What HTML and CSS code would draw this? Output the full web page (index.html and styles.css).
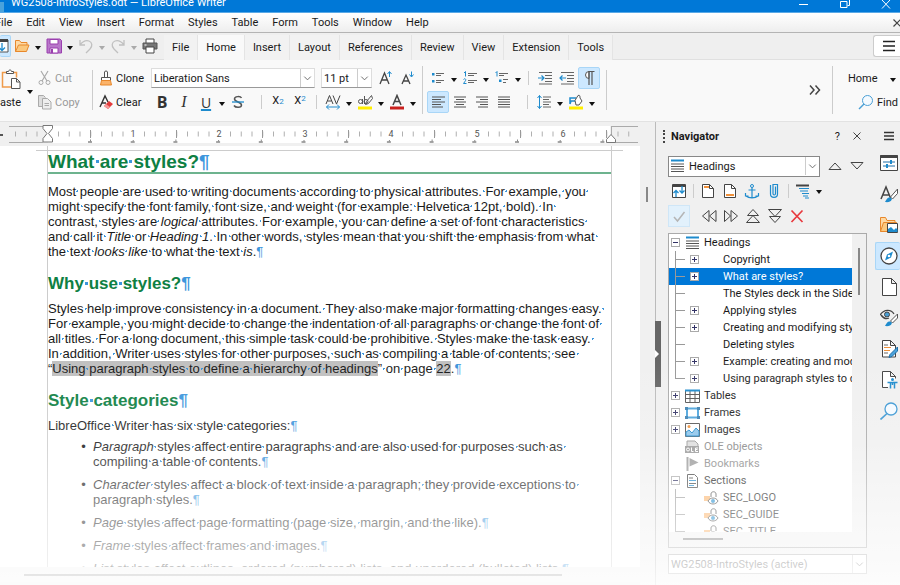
FILE: index.html
```html
<!DOCTYPE html>
<html lang="en">
<head>
  <meta charset="UTF-8" />
  <meta name="viewport" content="width=device-width, initial-scale=1.0"/>
  <title>WG2508-IntroStyles.odt — LibreOffice Writer</title>
  <link rel="stylesheet" href="styles.css">
</head>
<body>
  <div class="window">
    <header class="titlebar">
      <span class="app-icon"></span>
      <span class="title">WG2508-IntroStyles.odt — LibreOffice Writer</span>
      <button class="win-btn" aria-label="Minimize"><svg width="12" height="12" viewBox="0 0 12 12"><path d="M1 4.500h9"/></svg></button>
      <button class="win-btn" aria-label="Restore"><svg width="12" height="12" viewBox="0 0 12 12"><path d="M1.500 1.500h6.500v6h-6.500zM4 -.5h6.500v6h-2"/></svg></button>
      <button class="win-btn" aria-label="Close"><svg width="12" height="12" viewBox="0 0 12 12"><path d="M2 0l8 8.500M10 0l-8 8.500"/></svg></button>
    </header>

    <nav class="menubar">
      <a href="#">File</a>
      <a href="#">Edit</a>
      <a href="#">View</a>
      <a href="#">Insert</a>
      <a href="#">Format</a>
      <a href="#">Styles</a>
      <a href="#">Table</a>
      <a href="#">Form</a>
      <a href="#">Tools</a>
      <a href="#">Window</a>
      <a href="#">Help</a>
      <button class="close-doc" aria-label="Close document"><svg width="8" height="8" viewBox="0 0 8 8"><path d="M1.500 .5l7 7M8.500 .5l-7 7" stroke="#444" stroke-width="1.200"/></svg></button>
    </nav>

    <div class="tabbar">
      <button class="tool first on" aria-label="Templates"><svg width="16" height="16" viewBox="0 0 16 16"><path d="M1 2h13v12h-13z" fill="#fff" stroke="#555"/><path d="M1 2.500h13" stroke="#444" stroke-width="3"/><path d="M8 5v7M5 9.500l3 3 3-3" fill="none" stroke="#1e8bcd" stroke-width="1.300"/></svg></button>
      <button class="tool" aria-label="Open"><svg width="16" height="16" viewBox="0 0 16 16"><path d="M1.500 13.500v-11h4l1.500 2h6v2.500" fill="#fdd9a4" stroke="#e8872a"/><path d="M1.500 13.500l3-6.500h10.500l-2.500 6.500z" fill="#fbc87e" stroke="#e8872a"/></svg></button>
      <button class="caret" aria-label="Open options"></button>
      <button class="tool" aria-label="Save"><svg width="16" height="16" viewBox="0 0 16 16"><path d="M1 1h13l1.500 1.500v12.500h-14.500z" fill="#b877c9" stroke="#9a3fae"/><path d="M4 1.500h8v4.500h-8zM4 10h8v5h-8z" fill="#fff" stroke="#9a3fae"/><path d="M6 11v4" stroke="#9a3fae" stroke-width="2"/></svg></button>
      <button class="caret" aria-label="Save options"></button>
      <button class="tool" aria-label="Undo" disabled><svg width="16" height="16" viewBox="0 0 16 16"><path d="M2 2v5h5M2 7c3-4 6-5 9-4s4 5 1 8l-4 4" fill="none" stroke="#c0c0c0" stroke-width="1.300"/></svg></button>
      <button class="caret off" aria-label="Undo options" disabled></button>
      <button class="tool" aria-label="Redo" disabled><svg width="16" height="16" viewBox="0 0 16 16"><path d="M14 2v5h-5M14 7c-3-4-6-5-9-4s-4 5-1 8l4 4" fill="none" stroke="#c0c0c0" stroke-width="1.300"/></svg></button>
      <button class="caret off" aria-label="Redo options" disabled></button>
      <button class="tool" aria-label="Print"><svg width="16" height="16" viewBox="0 0 16 16"><path d="M4 5v-4h8v4" fill="#fff" stroke="#444"/><path d="M1 5h14v6h-14z" fill="#777" stroke="#555"/><path d="M4 9h8v6h-8z" fill="#fff" stroke="#444"/><path d="M2.500 7h2" stroke="#fff"/></svg></button>
      <div class="tabs">
        <button class="tab">File</button>
        <button class="tab active">Home</button>
        <button class="tab">Insert</button>
        <button class="tab">Layout</button>
        <button class="tab">References</button>
        <button class="tab">Review</button>
        <button class="tab">View</button>
        <button class="tab">Extension</button>
        <button class="tab">Tools</button>
      </div>
      <button class="hamburger" aria-label="Menu"><svg width="14" height="12" viewBox="0 0 14 12"><path d="M1 1.500h12M1 6h12M1 10.500h12" stroke="#222" stroke-width="1.500"/></svg></button>
    </div>

    <div class="ribbon">
      <div class="paste">
        <button class="paste-btn"><svg width="20" height="22" viewBox="0 0 20 22"><path d="M11 18h-9.500v-14.500h14v5" fill="none" stroke="#ef9a4a" stroke-width="1.500"/><path d="M5.500 4.500v-2h2c0-2 3-2 3 0h2v2z" fill="#fff" stroke="#555"/><path d="M10.500 9.500h5l3.500 3.500v6.500h-8.500z" fill="#fff" stroke="#555"/><path d="M15.500 9.500v3.500h3.500" fill="none" stroke="#555"/></svg><span>Paste</span></button>
        <button class="caret" aria-label="Paste options"></button>
      </div>
      <div class="rows clip">
        <button class="labeled" disabled><svg width="14" height="16" viewBox="0 0 14 16"><path d="M3 1l6 10M10 1l-6 10" fill="none" stroke="#aaa" stroke-width="1.200"/><circle cx="3" cy="12.500" r="2" fill="none" stroke="#aaa"/><circle cx="10" cy="12.500" r="2" fill="none" stroke="#aaa"/></svg>Cut</button>
        <button class="labeled" disabled><svg width="14" height="16" viewBox="0 0 14 16"><path d="M4 12.500h-3.500v-11h5l2 2" fill="#ddd" stroke="#aaa"/><path d="M4.500 4.500h5l3.500 3.500v7h-8.500z" fill="#eee" stroke="#aaa"/><path d="M6.500 9.500h4.500M6.500 11.500h4.500" stroke="#aaa"/></svg>Copy</button>
      </div>
      <span class="rule"></span>
      <div class="rows clone">
        <button class="labeled"><svg width="14" height="16" viewBox="0 0 14 16"><path d="M5.500 7v-5c0-1.300 3-1.300 3 0v5" fill="#fff" stroke="#555"/><path d="M2.500 7.500h9v3h-9z" fill="#fff" stroke="#555"/><path d="M2.500 10.500h9l1 4.500h-11z" fill="#fbb36a" stroke="#e8872a"/></svg>Clone</button>
        <button class="labeled"><svg width="14" height="16" viewBox="0 0 14 16"><path d="M1 13l5-11 3 6M3 9h4" fill="none" stroke="#333" stroke-width="1.400"/><path d="M5 12l5-5 4 3-5 5z" fill="#e33b3b"/><path d="M5 12l2-2 4 3-2 2z" fill="#f59a9a"/></svg>Clear</button>
      </div>

      <div class="rows font">
        <div class="row">
          <div class="combo font-name">
            <select aria-label="Font name"><option>Liberation Sans</option></select>
            <svg class="chev" width="14" height="18" viewBox="0 0 14 18"><path d="M3.500 7.500l3.500 3.500 3.500-3.500"/></svg>
          </div>
          <div class="combo font-size">
            <select aria-label="Font size"><option>11 pt</option></select>
            <svg class="chev" width="14" height="18" viewBox="0 0 14 18"><path d="M3.500 7.500l3.500 3.500 3.500-3.500"/></svg>
          </div>
          <button class="tool" aria-label="Increase size"><svg width="16" height="16" viewBox="0 0 16 16"><path d="M2 14l4.500-11 4.500 11M3.500 10h6" fill="none" stroke="#444" stroke-width="1.300"/><path d="M11.500 7v-5M9.500 4l2-2.500 2 2.500" fill="none" stroke="#1e8bcd"/></svg></button>
          <button class="tool" aria-label="Decrease size"><svg width="16" height="16" viewBox="0 0 16 16"><path d="M2 14l4-9 4 9M3.500 11h5" fill="none" stroke="#444" stroke-width="1.300"/><path d="M11.500 1.500v5M9.500 4.500l2 2.500 2-2.500" fill="none" stroke="#1e8bcd"/></svg></button>
        </div>
        <div class="row">
          <button class="tool bold">B</button>
          <button class="tool italic">I</button>
          <button class="tool under">U</button>
          <button class="caret" aria-label="Underline options"></button>
          <button class="tool strike" aria-label="Strikethrough"><svg width="16" height="16" viewBox="0 0 16 16"><path d="M11.500 4c-1-2-7-2-7 1s7 3 7 6-6 3-7.500 .5" fill="none" stroke="#555" stroke-width="1.500"/><path d="M2 8h12" stroke="#1e8bcd" stroke-width="1.300"/></svg></button>
          <span class="sep wide"></span>
          <button class="tool script">X<sub>2</sub></button>
          <button class="tool script">X<sup>2</sup></button>
          <span class="sep"></span>
          <button class="tool" aria-label="Spacing"><svg width="16" height="16" viewBox="0 0 16 16"><path d="M1 10l3.500-8.500 3.500 8.500M2.500 7h4M8 1.500l3.500 8.500 3.500-8.500" fill="none" stroke="#444"/><path d="M1.500 13h13M4 10.500l-2.500 2.500 2.500 2.500M12 10.500l2.500 2.500-2.500 2.500" fill="none" stroke="#1e8bcd"/></svg></button>
          <button class="caret" aria-label="Spacing options"></button>
          <button class="tool" aria-label="Highlighting"><svg width="16" height="16" viewBox="0 0 16 16"><path d="M1 12.500h14v3h-14z" fill="#ffee00"/><circle cx="3.500" cy="7.500" r="2" fill="none" stroke="#555"/><path d="M5.500 5v5M7.500 2v8M14.500 1.500l-5 6-1 3 3-1 4-5z" fill="none" stroke="#555"/><circle cx="9" cy="7.500" r="2" fill="none" stroke="#555"/></svg></button>
          <button class="caret" aria-label="Highlighting options"></button>
          <button class="tool" aria-label="Font color"><svg width="16" height="16" viewBox="0 0 16 16"><path d="M1 12.500h14v3h-14z" fill="#c9211e"/><path d="M4 11l4-9.500 4 9.500M5.500 7.500h5" fill="none" stroke="#444" stroke-width="1.500"/></svg></button>
          <button class="caret" aria-label="Font color options"></button>
        </div>
      </div>
      <span class="rule tall"></span>

      <div class="rows para">
        <div class="row">
          <button class="tool" aria-label="Bullets"><svg width="16" height="16" viewBox="0 0 16 16"><path d="M2 3h2.500v2.500h-2.500zM2 10h2.500v2.500h-2.500z" fill="#1e8bcd"/><path d="M6 3.500h8M6 5.500h5M6 10.500h8M6 12.500h5" stroke="#666"/></svg></button>
          <button class="caret" aria-label="Bullets options"></button>
          <button class="tool" aria-label="Numbering"><svg width="16" height="16" viewBox="0 0 16 16"><path d="M2 3l1.500-1.500v5M1.500 9.500c1-1.500 3-.5 2 1.200l-2 2.800h3" fill="none" stroke="#1e8bcd"/><path d="M6 3.500h9M6 5.500h6M6 10.500h9M6 12.500h6" stroke="#666"/></svg></button>
          <button class="caret" aria-label="Numbering options"></button>
          <button class="tool" aria-label="Outline"><svg width="16" height="16" viewBox="0 0 16 16"><path d="M1.500 3l1.500-1.500v5" fill="none" stroke="#1e8bcd"/><path d="M5 9.500h2.500v2.500h-2.500z" fill="#1e8bcd"/><path d="M5 3.500h9M5 5.500h5M9 9.500h5M9 12.500h3" stroke="#666"/></svg></button>
          <button class="caret" aria-label="Outline options"></button>
          <span class="sep"></span>
          <button class="tool" aria-label="Increase indent"><svg width="16" height="16" viewBox="0 0 16 16"><path d="M2 2.500h13M8 5.500h7M8 8.500h7M8 11.500h7M2 14h13" stroke="#666"/><path d="M1 8h6M4.500 5.500l2.500 2.500-2.500 2.500" fill="none" stroke="#1e8bcd" stroke-width="1.200"/></svg></button>
          <button class="tool" aria-label="Decrease indent"><svg width="16" height="16" viewBox="0 0 16 16"><path d="M2 2.500h13M8 5.500h7M8 8.500h7M8 11.500h7M2 14h13" stroke="#666"/><path d="M1 8h6M3.500 5.500l-2.500 2.500 2.500 2.500" fill="none" stroke="#1e8bcd" stroke-width="1.200"/></svg></button>
          <button class="tool on" aria-label="Formatting marks"><svg width="16" height="16" viewBox="0 0 16 16"><path d="M8 1.500a3.500 3.500 0 0 0 0 7z" fill="#fff" stroke="#555"/><path d="M8 15v-13.500h5.500M11 15v-13.500" fill="none" stroke="#555" stroke-width="1.200"/></svg></button>
        </div>
        <div class="row">
          <button class="tool on" aria-label="Align left"><svg width="16" height="16" viewBox="0 0 16 16"><path d="M2 3h13M2 5.500h9M2 8h13M2 10.500h9M2 13h11" stroke="#555"/></svg></button>
          <button class="tool" aria-label="Center"><svg width="16" height="16" viewBox="0 0 16 16"><path d="M2 3h12M4 5.500h8M2 8h12M4 10.500h8M2 13h12" stroke="#555"/></svg></button>
          <button class="tool" aria-label="Align right"><svg width="16" height="16" viewBox="0 0 16 16"><path d="M2 3h12M6 5.500h8M2 8h12M6 10.500h8M4 13h10" stroke="#555"/></svg></button>
          <button class="tool" aria-label="Justify"><svg width="16" height="16" viewBox="0 0 16 16"><path d="M2 3h12M2 5.500h12M2 8h12M2 10.500h12M2 13h12" stroke="#555"/></svg></button>
          <span class="sep wide"></span>
          <button class="tool" aria-label="Line spacing"><svg width="16" height="16" viewBox="0 0 16 16"><path d="M7 3h8M7 5.500h6M7 8h8M7 10.500h6M7 13h8" stroke="#666"/><path d="M3.500 1.500v13M1.500 4l2-2.500 2 2.500M1.500 12l2 2.500 2-2.500" fill="none" stroke="#1e8bcd"/></svg></button>
          <button class="caret" aria-label="Line spacing options"></button>
          <button class="tool" aria-label="Background color"><svg width="16" height="16" viewBox="0 0 16 16"><path d="M1 12.500h14v3h-14z" fill="#ffee00"/><path d="M2 10v-6h6M2 10l1-3h5" fill="none" stroke="#1e8bcd" stroke-width="1.500"/><path d="M7 6.500l3-5c2-1 2 1 2 2.500l2 3-3 4h-3z" fill="#fff" stroke="#555"/></svg></button>
          <button class="caret" aria-label="Background options"></button>
        </div>
      </div>
      <span class="rule"></span>
      <button class="more" aria-label="More"><svg width="14" height="12" viewBox="0 0 14 12"><path d="M2 1.500l4 4.500-4 4.500M7.500 1.500l4 4.500-4 4.500" fill="none" stroke="#444" stroke-width="1.500"/></svg></button>
      <span class="rule tall"></span>
      <div class="rows home">
        <button class="labeled">Home <span class="caret"></span></button>
        <button class="labeled find"><svg width="16" height="16" viewBox="0 0 16 16"><circle cx="9.500" cy="6.500" r="5" fill="#f4faff" stroke="#4a9fd5"/><path d="M6 10l-5 5" stroke="#4a9fd5" stroke-width="1.500"/></svg>Find</button>
      </div>
    </div>

    <main class="main">
      <section class="editor">
        <div class="ruler">
          <svg width="640" height="24" viewBox="0 0 640 24">
            <path d="M48 4h562v17h-562z" fill="#fff"/>
            <path d="M9 4.500h34M9 20.500h34M611 4.500h27M611 20.500h27M611.500 4v10" stroke="#aaa"/>
            <path d="M0 13h3" stroke="#555" stroke-width="2"/>
            <path d="M15 12h600M617.500 12h14" stroke="#b0b0b0" stroke-width="5" stroke-dasharray="1 9.750"/>
            <path d="M90 12h520" stroke="#999" stroke-width="8" stroke-dasharray="1 85"/>
            <path d="M88 20h522" stroke="#888" stroke-width="1.500" stroke-dasharray="4 38.700"/>
            <path d="M90 18.500h520" stroke="#888" stroke-width="2" stroke-dasharray="1 41.700"/>
            <path d="M129 6h9v12h-9zM215 6h9v12h-9zM301 6h9v12h-9zM387 6h9v12h-9zM473 6h9v12h-9zM559 6h9v12h-9z" fill="#fff"/>
            <g class="ruler-num"><text x="133" y="15">1</text><text x="219" y="15">2</text><text x="305" y="15">3</text><text x="391" y="15">4</text><text x="477" y="15">5</text><text x="563" y="15">6</text></g>
            <path d="M43 3.500h9.500v3l-4 5 4 5v3.500h-9.500v-3.500l4-5-4-5z" fill="#fff" stroke="#777"/>
            <path d="M606.500 20.500v-3l4.500-5 4.500 5v3z" fill="#fff" stroke="#777"/>
          </svg>
        </div>
        <article class="page">
          <div class="text">
            <h1>What are styles?<i class="pil">¶</i></h1>
            <p>Most people are used to writing documents according to physical attributes. For example, you <br>might specify the font family, font size, and weight (for example: Helvetica 12pt, bold). In <br>contrast, styles are <em>logical</em> attributes. For example, you can define a set of font characteristics <br>and call it <em>Title</em> or <em>Heading 1</em>. In other words, styles mean that you shift the emphasis from what <br>the text <em>looks like</em> to what the text <em>is</em>.<i class="pil">¶</i></p>
            <h2>Why use styles?<i class="pil">¶</i></h2>
            <p>Styles help improve consistency in a document. They also make major formatting changes easy. <br>For example, you might decide to change the indentation of all paragraphs or change the font of <br>all titles. For a long document, this simple task could be prohibitive. Styles make the task easy. <br>In addition, Writer uses styles for other purposes, such as compiling a table of contents; see <br>“<span class="field">Using paragraph styles to define a hierarchy of headings</span>” on page <span class="field">22</span>.<i class="pil">¶</i></p>
            <h2>Style categories<i class="pil">¶</i></h2>
            <p>LibreOffice Writer has six style categories:<i class="pil">¶</i></p>
            <ul>
              <li><em>Paragraph</em> styles affect entire paragraphs and are also used for purposes such as <br>compiling a table of contents.<i class="pil">¶</i></li>
              <li><em>Character</em> styles affect a block of text inside a paragraph; they provide exceptions to <br>paragraph styles.<i class="pil">¶</i></li>
              <li><em>Page</em> styles affect page formatting (page size, margin, and the like).<i class="pil">¶</i></li>
              <li><em>Frame</em> styles affect frames and images.<i class="pil">¶</i></li>
              <li><em>List</em> styles affect outlines, ordered (numbered) lists, and unordered (bulleted) lists.<i class="pil">¶</i></li>
            </ul>
          </div>
        </article>
        <div class="hscroll"><span></span></div>
      </section>
      <div class="vscroll"><span></span></div>

      <div class="splitter"><button aria-label="Hide sidebar"></button></div>

      <aside class="deck">
        <div class="deck-head">
          <span class="grip"></span>
          <h3>Navigator</h3>
          <button class="help" aria-label="Help">?</button>
          <button class="tool" aria-label="Close sidebar"><svg width="10" height="10" viewBox="0 0 10 10"><path d="M1.500 1.500l7 7M8.500 1.500l-7 7" stroke="#444"/></svg></button>
        </div>
        <div class="nav-by">
          <div class="combo">
            <svg width="16" height="16" viewBox="0 0 16 16"><path d="M2 2.500h13" stroke="#1e8bcd" stroke-width="2"/><path d="M2 6h13M2 8.500h13M2 11h13M2 13.500h13" stroke="#555"/></svg>
            <select aria-label="Navigate by"><option>Headings</option></select>
            <svg class="chev" width="14" height="18" viewBox="0 0 14 18"><path d="M3.500 7.500l3.500 3.500 3.500-3.500"/></svg>
          </div>
          <button class="tool" aria-label="Previous"><svg width="16" height="16" viewBox="0 0 16 16"><path d="M2 11.500l6-6.500 6 6.500z" fill="none" stroke="#444"/></svg></button>
          <button class="tool" aria-label="Next"><svg width="16" height="16" viewBox="0 0 16 16"><path d="M2 4.500l6 6.500 6-6.500z" fill="none" stroke="#444"/></svg></button>
        </div>
        <div class="nav-tools">
          <button class="tool" aria-label="Content view"><svg width="16" height="16" viewBox="0 0 16 16"><path d="M1.500 14.500v-13h13v13z" fill="#fff" stroke="#444"/><path d="M1.500 3h13" stroke="#444" stroke-width="2"/><path d="M5 14v-6M2.500 10l2.500-2.500 2.500 2.500M11 3v7M8.500 7.500l2.500 2.500 2.500-2.500" fill="none" stroke="#1e8bcd" stroke-width="1.300"/></svg></button>
          <span class="sep"></span>
          <button class="tool" aria-label="Header"><svg width="16" height="16" viewBox="0 0 16 16"><path d="M2.500 1.500h7l4 4v9h-11z" fill="#fff" stroke="#444"/><path d="M9.500 1.500v4h4" fill="none" stroke="#444"/><path d="M4 4h5" stroke="#f0913a" stroke-width="2"/></svg></button>
          <button class="tool" aria-label="Footer"><svg width="16" height="16" viewBox="0 0 16 16"><path d="M2.500 1.500h7l4 4v9h-11z" fill="#fff" stroke="#444"/><path d="M9.500 1.500v4h4" fill="none" stroke="#444"/><path d="M4 12h8" stroke="#f0913a" stroke-width="2"/></svg></button>
          <button class="tool" aria-label="Anchor"><svg width="16" height="16" viewBox="0 0 16 16"><circle cx="8" cy="3" r="1.500" fill="none" stroke="#1e8bcd"/><path d="M8 4.500v10M4.500 7h7M1.500 10v3h3M14.500 10v3h-3M2 13c3 2.500 9 2.500 12 0" fill="none" stroke="#1e8bcd" stroke-width="1.200"/></svg></button>
          <button class="tool" aria-label="Reminder"><svg width="16" height="16" viewBox="0 0 16 16"><path d="M4.500 2v9c0 4.500 7 4.500 7 0v-9.500h-4.500v9c0 2 2.500 2 2.500 0v-7" fill="none" stroke="#1e8bcd" stroke-width="1.200"/></svg></button>
          <span class="sep"></span>
          <button class="tool" aria-label="Heading levels"><svg width="16" height="16" viewBox="0 0 16 16"><path d="M1 2.500h13" stroke="#444" stroke-width="2"/><path d="M4 5.500h10M5 8h8M7 10.500h7M8 13h5M10 15h4" stroke="#1e8bcd"/></svg></button>
          <button class="caret" aria-label="Heading level options"></button>
        </div>
        <div class="nav-tools">
          <button class="tool check" aria-label="Apply"><svg width="16" height="16" viewBox="0 0 16 16"><path d="M3 9l3.500 4 7-9" fill="none" stroke="#b5b5b5" stroke-width="1.500"/></svg></button>
          <span class="gap"></span>
          <button class="tool" aria-label="Promote"><svg width="16" height="16" viewBox="0 0 16 16"><path d="M8 2.500v11l-6.500-5.500zM15 2.500v11l-6.500-5.500z" fill="none" stroke="#444"/></svg></button>
          <button class="tool" aria-label="Demote"><svg width="16" height="16" viewBox="0 0 16 16"><path d="M1.500 2.500v11l6-5.500zM8 2.500v11l6.500-5.500z" fill="none" stroke="#444"/></svg></button>
          <button class="tool" aria-label="Move up"><svg width="16" height="16" viewBox="0 0 16 16"><path d="M2.500 7.500l5.500-6 5.500 6zM1.500 14.500l6.500-7 6.500 7z" fill="none" stroke="#444"/></svg></button>
          <button class="tool" aria-label="Move down"><svg width="16" height="16" viewBox="0 0 16 16"><path d="M1.500 1.500l6.500 7 6.500-7zM2.500 8.500l5.500 6 5.500-6z" fill="none" stroke="#444"/></svg></button>
          <button class="tool" aria-label="Delete"><svg width="16" height="16" viewBox="0 0 16 16"><path d="M2.500 2.500l11 11.500M13.500 2.500l-11 11.500" stroke="#e8383d" stroke-width="1.700"/></svg></button>
        </div>

        <div class="tree-box">
          <div class="tree">
            <ul>
              <li class="row1"><b class="exp open"></b><svg width="16" height="16" viewBox="0 0 16 16"><path d="M2 2.500h13" stroke="#1e8bcd" stroke-width="2"/><path d="M2 6h13M2 8.500h13M2 11h13M2 13.500h13" stroke="#555"/></svg>Headings</li>
              <li class="row2"><b class="exp"></b><span>Copyright</span></li>
              <li class="row2 selected"><b class="exp"></b><span>What are styles?</span></li>
              <li class="row2"><b></b><span>The Styles deck in the Sidebar</span></li>
              <li class="row2"><b class="exp"></b><span>Applying styles</span></li>
              <li class="row2"><b class="exp"></b><span>Creating and modifying styles</span></li>
              <li class="row2"><b></b><span>Deleting styles</span></li>
              <li class="row2"><b class="exp"></b><span>Example: creating and modifying</span></li>
              <li class="row2 last"><b class="exp"></b><span>Using paragraph styles to define</span></li>
              <li class="row1"><b class="exp"></b><svg width="16" height="16" viewBox="0 0 16 16"><path d="M1.500 2.500h14v12h-14zM1.500 6.500h14M1.500 10.500h14M6 2.500v12M11 2.500v12" fill="#fff" stroke="#555"/><path d="M1 2.500h15" stroke="#1e8bcd" stroke-width="2"/></svg>Tables</li>
              <li class="row1"><b class="exp"></b><svg width="16" height="16" viewBox="0 0 16 16"><path d="M3 3.500h11v9h-11z" fill="#fff" stroke="#4aa3dc" stroke-width="2"/><path d="M1 2h3v3h-3zM13 2h3v3h-3zM1 11h3v3h-3zM13 11h3v3h-3z" fill="#3a7fb0"/></svg>Frames</li>
              <li class="row1"><b class="exp"></b><svg width="16" height="16" viewBox="0 0 16 16"><path d="M1.500 1.500h14v13h-14z" fill="#fff" stroke="#555"/><circle cx="5" cy="4.500" r="1.500" fill="#f0913a"/><path d="M2 14v-4l3-2 3 3 4-5 3 3v5z" fill="#8cc4ea" stroke="#1e8bcd"/></svg>Images</li>
              <li class="row1 off"><b></b><svg width="16" height="16" viewBox="0 0 16 16"><path d="M3 8v-6h8l3 3v3" fill="#ddd" stroke="#999"/><path d="M1 7h14v7h-14z" fill="#999"/><circle cx="4" cy="10.500" r="1.500" fill="none" stroke="#fff"/><path d="M7.500 8.500v4h2M14 9h-2.500v3.500h2.500M11.500 10.500h2" fill="none" stroke="#fff"/></svg>OLE objects</li>
              <li class="row1 off"><b></b><svg width="16" height="16" viewBox="0 0 16 16"><path d="M3.500 1v14" stroke="#999" stroke-width="2"/><path d="M5.500 2l9 4.500-9 4z" fill="#999"/></svg>Bookmarks</li>
              <li class="row1"><b class="exp open"></b><svg width="16" height="16" viewBox="0 0 16 16"><path d="M3.500 1.500h7l3 3v10h-10z" fill="#fff" stroke="#444"/><path d="M5 5h4M5 10.500h7" stroke="#444"/><path d="M5 7.500h7M5 12.500h5" stroke="#1e8bcd"/></svg>Sections</li>
              <li class="row2 sect"><svg width="16" height="16" viewBox="0 0 16 16"><path d="M1 6h6v5h-6z" fill="#fbb36a"/><path d="M8 7v-3c0-3 5-3 5 0v3" fill="none" stroke="#444"/><path d="M5 11c2-4 8-4 10 0-2 4-8 4-10 0z" fill="#fff" stroke="#444"/><circle cx="10" cy="11" r="2" fill="#1e8bcd"/></svg><span>SEC_LOGO</span></li>
              <li class="row2 sect"><svg width="16" height="16" viewBox="0 0 16 16"><path d="M1 6h6v5h-6z" fill="#fbb36a"/><path d="M8 7v-3c0-3 5-3 5 0v3" fill="none" stroke="#444"/><path d="M5 11c2-4 8-4 10 0-2 4-8 4-10 0z" fill="#fff" stroke="#444"/><circle cx="10" cy="11" r="2" fill="#1e8bcd"/></svg><span>SEC_GUIDE</span></li>
              <li class="row2 sect"><svg width="16" height="16" viewBox="0 0 16 16"><path d="M1 6h6v5h-6z" fill="#fbb36a"/><path d="M8 7v-3c0-3 5-3 5 0v3" fill="none" stroke="#444"/><path d="M5 11c2-4 8-4 10 0-2 4-8 4-10 0z" fill="#fff" stroke="#444"/><circle cx="10" cy="11" r="2" fill="#1e8bcd"/></svg><span>SEC_TITLE</span></li>
            </ul>
          </div>
          <div class="tree-v"></div>
          <div class="tree-h"></div>
        </div>
        <div class="combo doc-list">
          <select aria-label="Active window"><option>WG2508-IntroStyles (active)</option></select>
          <svg class="chev" width="14" height="18" viewBox="0 0 14 18"><path d="M3.500 7.500l3.500 3.500 3.500-3.500"/></svg>
        </div>
      </aside>

      <nav class="side-tabs">
        <button aria-label="Sidebar settings"><svg width="18" height="18" viewBox="0 0 18 18"><path d="M4 5.500h10M4 9h10M4 12.500h10" stroke="#333" stroke-width="1.300"/></svg></button>
        <button aria-label="Properties"><svg width="18" height="18" viewBox="0 0 18 18"><path d="M.5 1.500h17v15h-17z" fill="#fff" stroke="#444"/><path d="M.5 2.500h17" stroke="#444" stroke-width="3"/><path d="M3 8h12M3 12h12" stroke="#1e6fa8"/><path d="M10 6h2v4h-2zM6 10h2v4h-2z" fill="#1e8bcd"/></svg></button>
        <button aria-label="Styles"><svg width="18" height="18" viewBox="0 0 18 18"><path d="M1 14l5-12 4.500 11M3 10h6" fill="none" stroke="#444" stroke-width="1.500"/><path d="M17.500 4l-7 8 2 2 5-5.500z" fill="#fff" stroke="#555"/><path d="M5 17c2-4 4-6 7-3-1 3-4 3.500-7 3z" fill="#1e8bcd"/></svg></button>
        <button aria-label="Gallery"><svg width="18" height="18" viewBox="0 0 18 18"><path d="M.5 15.500v-14h5l1.500 3h8v3" fill="#fdd9a4" stroke="#e8872a"/><path d="M.5 15.500l3-9h13v9z" fill="#fbc87e" stroke="#e8872a"/><path d="M7.500 7.500h10v9h-10z" fill="#fff" stroke="#444"/><path d="M8 16v-3l3-2 3 3 2-2 1.500 1.500v2.500z" fill="#1e8bcd"/></svg></button>
        <button class="on" aria-label="Navigator"><svg width="18" height="18" viewBox="0 0 18 18"><circle cx="9" cy="9" r="8" fill="#fff" stroke="#444" stroke-width="1.300"/><path d="M13 4.500l-2 6-6 3 2-6z" fill="#1e8bcd"/><circle cx="9" cy="9" r="1.300" fill="#fff"/></svg></button>
        <button aria-label="Page"><svg width="18" height="18" viewBox="0 0 18 18"><path d="M2.500 .5h9l5 5v12h-14zM11.500 .5v5h5" fill="#fff" stroke="#444"/></svg></button>
        <button aria-label="Style inspector"><svg width="18" height="18" viewBox="0 0 18 18"><path d="M0 6c4-6 11-6 14-1M1 6c3 4 6 4 8 3" fill="none" stroke="#444" stroke-width="1.300"/><circle cx="7" cy="5.500" r="2.500" fill="#4a9fd5" stroke="#444"/><path d="M17.500 5l-7 7 2 2 5-5z" fill="#fff" stroke="#555"/><path d="M5 17c2-4 4-6 7-3-1 3-4 3.500-7 3z" fill="#1e8bcd"/></svg></button>
        <button aria-label="Manage changes"><svg width="18" height="18" viewBox="0 0 18 18"><path d="M2.500 .5h8l5 5v11.500h-13zM10.500 .5v5h5" fill="#fff" stroke="#444"/><path d="M4 5h4M4 13h4" stroke="#666"/><path d="M4 7.500h7M4 10.500h6" stroke="#f0913a"/><path d="M17.500 7l-7.500 7.500-1 3 3-1 5.500-5.500z" fill="#4aa3dc" stroke="#1e6fa8"/></svg></button>
        <button aria-label="Accessibility"><svg width="18" height="18" viewBox="0 0 18 18"><path d="M8 16.500h-5.500v-16h8l5 5v2M10.500 .5v5h5" fill="#fff" stroke="#444"/><circle cx="12.500" cy="8.500" r="1.500" fill="#1e8bcd"/><path d="M7.500 11.500h10M12.500 11v3M10.500 17.500v-6h4v6" fill="none" stroke="#1e8bcd" stroke-width="1.500"/></svg></button>
        <button aria-label="Find"><svg width="18" height="18" viewBox="0 0 18 18"><circle cx="11" cy="7" r="6" fill="#f4faff" stroke="#3b97d3" stroke-width="1.300"/><path d="M7 11.500l-6.500 6" stroke="#3b97d3" stroke-width="1.700"/></svg></button>
      </nav>
      <div class="fade"></div>
    </main>
  </div>

  <script src="script.js"></script>
</body>
</html>
```

FILE: styles.css
```css
* {
  box-sizing: border-box;
}
body {
  margin: 0;
  font-family: Roboto, "Open Sans", sans-serif;
  font-size: 11px;
  color: #1a1a1a;
  background: #f0f0f0;
}
button, select {
  font: inherit;
  color: inherit;
  background: none;
  border: none;
  padding: 0;
  margin: 0;
}
a {
  color: inherit;
  text-decoration: none;
}
svg {
  display: block;
  flex: none;
}
.window {
  height: 100vh;
  display: flex;
  flex-direction: column;
  overflow: hidden;
}

/* title and menu */
.titlebar {
  height: 13px;
  flex: none;
  display: flex;
  align-items: flex-end;
  overflow: hidden;
  background: #0078d7;
  color: #fff;
  padding-right: 8px;
  border-bottom: 1px solid #5aa9e6;
}
.app-icon {
  width: 4px;
  height: 10px;
  margin-right: 7px;
  background: #4aa3dc;
}
.title {
  flex: 1;
  line-height: 18px;
}
.win-btn {
  width: 12px;
  margin-left: 29px;
}
.win-btn svg {
  fill: none;
  stroke: #fff;
}
.menubar {
  height: 20px;
  flex: none;
  display: flex;
  align-items: center;
  gap: 14px;
  background: linear-gradient(#fff, #eee);
  border-bottom: 1px solid #b4b4b4;
}
.menubar a:first-child {
  margin-left: -5px;
}
.close-doc {
  margin-left: auto;
}

/* toolbar parts */
.tool {
  width: 22px;
  height: 22px;
  flex: none;
  display: flex;
  align-items: center;
  justify-content: center;
}
.on {
  background: #cce8ff;
  border: 1px solid #a9d6f7;
  border-radius: 2px;
}
.caret {
  width: 10px;
  height: 22px;
  flex: none;
  display: flex;
  align-items: center;
  justify-content: center;
}
.caret::before {
  content: "";
  border: 3px solid transparent;
  border-top: 4px solid #111;
  border-bottom: none;
  margin-top: 3px;
}
.caret.off::before {
  border-top-color: #aaa;
}
.sep {
  width: 1px;
  height: 14px;
  margin: 0 5px;
  background: #ccc;
}
.sep.wide {
  margin: 0 5px 0 12px;
}
.tabbar {
  height: 27px;
  flex: none;
  display: flex;
  align-items: center;
  background: #efefef;
  border-bottom: 1px solid #e0e0e0;
}
.first {
  width: 11px;
  justify-content: flex-end;
  border-left: none;
}
.tabs {
  flex: 1;
  align-self: stretch;
  display: flex;
  margin: 2px 0 -1px 3px;
}
.tab {
  padding: 0 8px;
  background: #f2f2f2;
  border-right: 1px solid #e4e4e4;
}
.tab.active {
  background: #f9f9f9;
}
.hamburger {
  width: 27px;
  height: 22px;
  display: flex;
  align-items: center;
  padding-left: 8px;
  background: #fff;
  border: 1px solid #ccc;
  border-right: none;
  border-radius: 3px 0 0 3px;
}

/* ribbon */
.ribbon {
  height: 62px;
  flex: none;
  display: flex;
  padding-top: 6px;
  background: #f9f9f9;
  border-bottom: 1px solid #e2e2e2;
}
.rows {
  height: 48px;
  display: grid;
  grid-template-rows: 24px 24px;
  align-items: center;
}
.row {
  display: flex;
  align-items: center;
}
.rule {
  width: 1px;
  height: 40px;
  margin-top: 4px;
  background: #ccc;
}
.rule.tall {
  height: 48px;
  margin-top: 0;
}
.paste {
  width: 38px;
  height: 48px;
  flex: none;
  display: flex;
  align-items: center;
}
.paste-btn {
  width: 24px;
  display: flex;
  flex-direction: column;
  align-items: flex-end;
  gap: 4px;
  padding-right: 3px;
  line-height: 16px;
}
.paste .caret {
  margin-left: 1px;
}
.labeled {
  display: flex;
  align-items: center;
  gap: 3px;
  white-space: nowrap;
}
.labeled:disabled {
  color: #999;
}
.clip {
  width: 54px;
}
.clone {
  width: 52px;
  margin-left: 6px;
}
.combo {
  height: 20px;
  display: flex;
  align-items: center;
  background: #fff;
  border: 1px solid #ddd;
  border-bottom-color: #999;
}
.combo select {
  flex: 1;
  min-width: 0;
  height: 18px;
  appearance: none;
  padding-left: 2px;
}
.chev {
  border-left: 1px solid #ccc;
  fill: none;
  stroke: #666;
}
.font {
  width: 271px;
  flex: none;
}
.font-name {
  width: 164px;
  margin-right: 6px;
}
.font-size {
  width: 51px;
  margin-right: 3px;
}
.bold {
  font: bold 16px "Open Sans", sans-serif;
  color: #333;
}
.italic {
  font: italic 16px "Liberation Serif", serif;
  color: #333;
}
.under {
  font: 14px "Open Sans", sans-serif;
  color: #333;
  text-decoration: underline #1e8bcd 2px;
}
.script {
  align-items: baseline;
  line-height: 20px;
}
.script sub, .script sup {
  font-size: 8px;
  line-height: 8px;
  color: #1e8bcd;
}
.script sup {
  align-self: flex-start;
  margin-top: 4px;
}
.para {
  padding-left: 4px;
  margin-right: 6px;
}
.more {
  height: 48px;
  margin-left: auto;
  margin-right: 10px;
}
.home {
  width: 67px;
  flex: none;
  padding-left: 15px;
}
.home .labeled {
  justify-content: space-between;
  padding-right: 2px;
}
.home .find {
  justify-content: flex-end;
}

/* document */
.main {
  flex: 1;
  min-height: 0;
  display: flex;
  position: relative;
}
.editor {
  flex: 1;
  min-width: 0;
  display: flex;
  flex-direction: column;
}
.ruler {
  height: 24px;
  overflow: hidden;
}
.ruler-num {
  font-size: 9px;
  fill: #555;
  text-anchor: middle;
}
.page {
  flex: 1;
  min-height: 0;
  overflow: hidden;
  background: #fff;
  padding: 0 28px 0 47px;
}
.text {
  min-height: 100%;
  border-left: 1px solid #ccc;
  border-right: 1px solid #ccc;
  font-family: "Liberation Sans", Arial, sans-serif;
  font-size: 13px;
  line-height: 15px;
  white-space: nowrap;
}
.text::before {
  content: "";
  display: block;
  height: 4px;
  margin: 0 -12px;
  border-bottom: 1px solid #ccc;
}
.text p, .text ul {
  margin: 0;
}
.text h1 {
  margin: 0 0 10px;
  font-size: 19px;
  line-height: 21px;
  color: #0e8043;
  border-bottom: 2px solid #6db38e;
}
.text h2 {
  margin: 15px 0 7px;
  font-size: 17px;
  line-height: 20px;
  color: #0e8043;
}
.text ul {
  margin-top: 6px;
  padding-left: 45px;
  list-style: "•  ";
}
.text li {
  margin-bottom: 8px;
}
.pil {
  font-style: normal;
  color: #3d96dc;
}
.field {
  background: #c0c0c0;
}
.dot {
  background: radial-gradient(circle, #3d96dc 1px, transparent 1px) center / 3px 3px no-repeat;
}
h1 .dot, h2 .dot {
  background: radial-gradient(circle, #3d96dc 2px, transparent 2px) center / 3px 3px no-repeat;
}
.hscroll {
  height: 18px;
  padding: 7px 78px 0 24px;
  border-bottom: 3px solid #e8e8e8;
}
.hscroll span {
  display: block;
  height: 2px;
  background: #888;
}
.vscroll {
  width: 15px;
  padding: 65px 0 0 6px;
}
.vscroll span {
  display: block;
  width: 2px;
  height: 15px;
  background: #888;
}

/* sidebar */
.splitter {
  width: 7px;
  display: flex;
  align-items: center;
  border-left: 1px solid #bbb;
}
.splitter button {
  width: 6px;
  height: 66px;
  margin-left: -1px;
  background: #666;
  display: flex;
  align-items: center;
}
.splitter button::before {
  content: "";
  border: 4px solid transparent;
  border-left-color: #fff;
  border-right: none;
}
.deck {
  width: 206px;
  padding-left: 6px;
  display: flex;
  flex-direction: column;
}
.deck-head {
  height: 28px;
  flex: none;
  display: flex;
  align-items: center;
  margin-left: -5px;
}
.grip {
  height: 13px;
  border-left: 2px dotted #444;
  margin-right: 6px;
}
.deck-head h3 {
  flex: 1;
  margin: 0;
  font-size: 11px;
}
.help {
  padding-right: 6px;
}
.nav-by {
  display: flex;
  align-items: center;
  margin: 5px 0 1px;
}
.nav-by .combo {
  width: 152px;
  height: 21px;
  border-color: #888;
  margin-right: 4px;
}
.nav-by select {
  padding-left: 4px;
}
.nav-tools {
  display: flex;
  align-items: center;
  height: 25px;
}
.nav-tools .sep {
  margin: 0 3px;
}
.gap {
  width: 8px;
}
.check {
  background: #e2f1fc;
  border: 1px solid #cfe6f7;
}
.tree-box {
  flex: 1;
  min-height: 0;
  margin: 5px 1px 6px 0;
  display: grid;
  grid-template-columns: 1fr 14px;
  grid-template-rows: 1fr 15px;
  border: 1px solid #aaa;
}
.tree {
  overflow: hidden;
  background: #fff;
  line-height: 17px;
}
.tree ul {
  list-style: none;
  margin: 0;
  padding: 0;
}
.tree li {
  height: 17px;
  display: flex;
  align-items: center;
  white-space: nowrap;
}
.tree b {
  width: 9px;
  height: 9px;
  flex: none;
}
.exp {
  border: 1px solid #aaa;
  background:
    linear-gradient(#336, #336) center / 5px 1px no-repeat,
    linear-gradient(#336, #336) center / 1px 5px no-repeat,
    #fff;
}
.exp.open {
  background: linear-gradient(#336, #336) center / 5px 1px no-repeat, #fff;
}
.row1 {
  gap: 4px;
  padding-left: 2px;
}
.row1.off {
  color: #888;
}
.row2::before {
  content: "";
  width: 9px;
  height: 17px;
  margin: 0 5px 0 6px;
  flex: none;
  border-left: 1px solid #999;
  background: linear-gradient(#999, #999) center / 100% 1px no-repeat;
}
.row2.last::before {
  height: 9px;
  align-self: flex-start;
  background-position: bottom;
}
.row2 b {
  margin-right: 24px;
}
.sect svg {
  margin: 0 4px 0 13px;
}
.selected {
  background: #0078d7;
  color: #fff;
}
.tree-v {
  width: 2px;
  height: 47px;
  margin: 14px 0 0 6px;
  background: #888;
}
.tree-h {
  width: 40px;
  height: 2px;
  margin: 6px 0 0 14px;
  background: #777;
}
.doc-list {
  flex: none;
  margin: 0 1px 11px 0;
  border-color: #aaa;
  color: #555;
}
.side-tabs {
  width: 25px;
  margin-left: 7px;
}
.side-tabs button {
  width: 25px;
  height: 28px;
  margin-bottom: 3px;
  padding: 0 2px 0 5px;
  display: flex;
  align-items: center;
}
.side-tabs button:first-child {
  height: 27px;
  margin-bottom: 0;
}
.side-tabs .on {
  padding-left: 4px;
  border-right: none;
}

/* window content fades out towards the bottom */
.fade {
  position: absolute;
  inset: 50% 0 0 0;
  pointer-events: none;
  background: linear-gradient(rgba(255, 255, 255, 0), rgba(255, 255, 255, .16) 40%, rgba(255, 255, 255, .38) 57%, rgba(255, 255, 255, .55) 73%, rgba(255, 255, 255, .7) 90%, rgba(255, 255, 255, .85));
}
```

FILE: script.js
```js
// mark every space in the document text with a dot
const walker = document.createTreeWalker(document.querySelector(".text"), NodeFilter.SHOW_TEXT);
const nodes = [];
while (walker.nextNode()) {
  if (walker.currentNode.data.trim() || walker.currentNode.data === " ") {
    nodes.push(walker.currentNode);
  }
}

nodes.forEach(function (node) {
  const parts = document.createDocumentFragment();
  node.data.split(/( )/).forEach(function (part) {
    if (part === " ") {
      const dot = document.createElement("span");
      dot.className = "dot";
      dot.textContent = "\u00a0";
      parts.append(dot);
    } else {
      parts.append(part);
    }
  });
  node.replaceWith(parts);
});
```
